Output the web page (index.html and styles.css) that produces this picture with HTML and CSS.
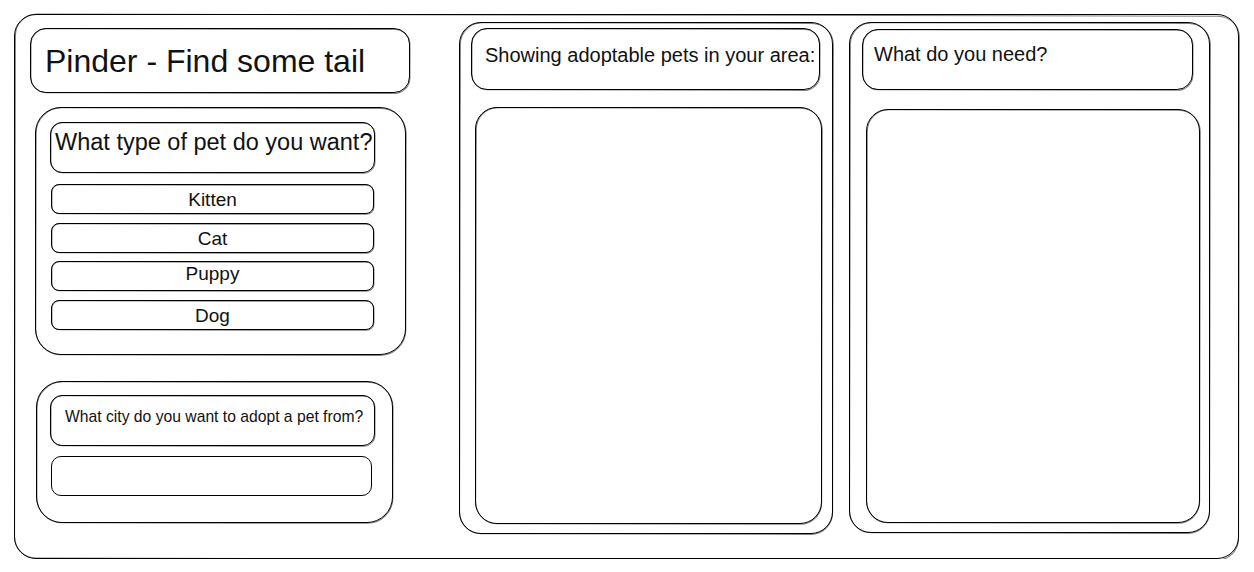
FILE: index.html
```html
<!DOCTYPE html>
<html lang="en">
<head>
    <meta charset="UTF-8">
    <meta name="viewport" content="width=device-width, initial-scale=1.0">
    <title>Pinder</title>
    <link rel="stylesheet" href="styles.css">
</head>
<body>
    <div class="frame sketch">
        <!-- Left side: title + filters -->
        <div class="sidebar">
            <h1 class="title sketch">Pinder - Find some tail</h1>

            <div class="group group--pet sketch">
                <h2 class="group__head group__head--big sketch">What type of pet do you want?</h2>
                <div class="pet-list">
                    <button class="option sketch">Kitten</button>
                    <button class="option sketch">Cat</button>
                    <button class="option option--high sketch">Puppy</button>
                    <button class="option sketch">Dog</button>
                </div>
            </div>

            <div class="group group--city sketch">
                <h2 class="group__head group__head--small sketch">What city do you want to adopt a pet from?</h2>
                <input type="text" name="city" class="city-input sketch" />
            </div>
        </div>

        <!-- Results -->
        <div class="panel panel--pets sketch">
            <h2 class="panel__head sketch">Showing adoptable pets in your area:</h2>
            <div class="panel__body sketch"></div>
        </div>

        <!-- Needs -->
        <div class="panel panel--needs sketch">
            <h2 class="panel__head sketch">What do you need?</h2>
            <div class="panel__body sketch"></div>
        </div>
    </div>
</body>
</html>
```

FILE: styles.css
```css
:root {
	/* COLORS */
	--ink: #000;
	--ink-soft: rgba(0, 0, 0, 0.5);
	--paper: #fff;

	font-family: "Liberation Sans", Arial, sans-serif;
	color: #111;
}

* {
	box-sizing: border-box;
}

body {
	margin: 0;
	background: var(--paper);
}

h1,
h2 {
	margin: 0;
	font-weight: 400;
}

/* hand drawn look: a second faint stroke slightly off the first */
.sketch {
	position: relative;
	border: 1px solid var(--ink);
	background: var(--paper);
}

.sketch::after {
	content: "";
	position: absolute;
	inset: -1px;
	border: 1px solid var(--ink-soft);
	border-radius: inherit;
	transform: translate(0.5px, 0.6px) rotate(0.1deg);
	pointer-events: none;
}

.frame {
	display: flex;
	align-items: flex-start;
	width: 1225px;
	height: 545px;
	margin: 14px 0 0 14px;
	padding: 7px 0 0 15px;
	border-radius: 22px;
}

/* LEFT COLUMN */
.sidebar {
	display: flex;
	flex-direction: column;
	align-items: flex-start;
	width: 380px;
	padding-top: 6px;
}

.title {
	width: 380px;
	height: 65px;
	padding: 14px 0 0 14px;
	border-radius: 16px;
	font-size: 32px;
	line-height: 36px;
	white-space: nowrap;
}

.group {
	display: flex;
	flex-direction: column;
	align-items: flex-start;
	border-radius: 26px;
}

.group--pet {
	width: 371px;
	height: 248px;
	margin: 14px 0 0 5px;
	padding: 14px 0 0 14px;
}

.group--city {
	width: 357px;
	height: 142px;
	margin: 26px 0 0 6px;
	padding: 13px 0 0 13px;
}

.group__head {
	width: 325px;
	height: 51px;
	border-radius: 12px;
	white-space: nowrap;
}

.group__head--big {
	padding: 5px 0 0 4px;
	font-size: 23.5px;
	line-height: 28px;
}

.group__head--small {
	padding: 12px 0 0 14px;
	font-size: 15.7px;
	line-height: 18px;
}

.pet-list {
	display: flex;
	flex-direction: column;
	gap: 8.5px;
	margin-top: 11px;
}

.option {
	width: 323px;
	height: 30px;
	margin-left: 1px;
	padding: 2px 0 0;
	border-radius: 8px;
	font-family: inherit;
	font-size: 19px;
	line-height: 24px;
	color: #111;
	text-align: center;
	cursor: pointer;
}

.option--high {
	padding: 0 0 5px;
}

.city-input {
	width: 321px;
	height: 40px;
	margin: 10px 0 0 1px;
	border-radius: 10px;
	outline: none;
}

/* RIGHT PANELS */
.panel {
	display: flex;
	flex-direction: column;
	align-items: flex-start;
	border-radius: 22px;
}

.panel--pets {
	width: 374px;
	height: 512px;
	margin-left: 49px;
	padding: 5px 0 0 11px;
}

.panel--needs {
	width: 361px;
	height: 511px;
	margin-left: 16px;
	padding: 6px 0 0 12px;
}

.panel__head {
	border-radius: 16px;
	font-size: 20px;
	line-height: 23px;
	white-space: nowrap;
}

.panel--pets .panel__head {
	width: 349px;
	height: 62px;
	padding: 15px 0 0 13px;
}

.panel--needs .panel__head {
	width: 331px;
	height: 61px;
	padding: 13px 0 0 11px;
}

.panel__body {
	border-radius: 22px;
	margin-left: 4px;
}

.panel--pets .panel__body {
	width: 347px;
	height: 417px;
	margin-top: 17px;
}

.panel--needs .panel__body {
	width: 334px;
	height: 414px;
	margin-top: 19px;
}
```
